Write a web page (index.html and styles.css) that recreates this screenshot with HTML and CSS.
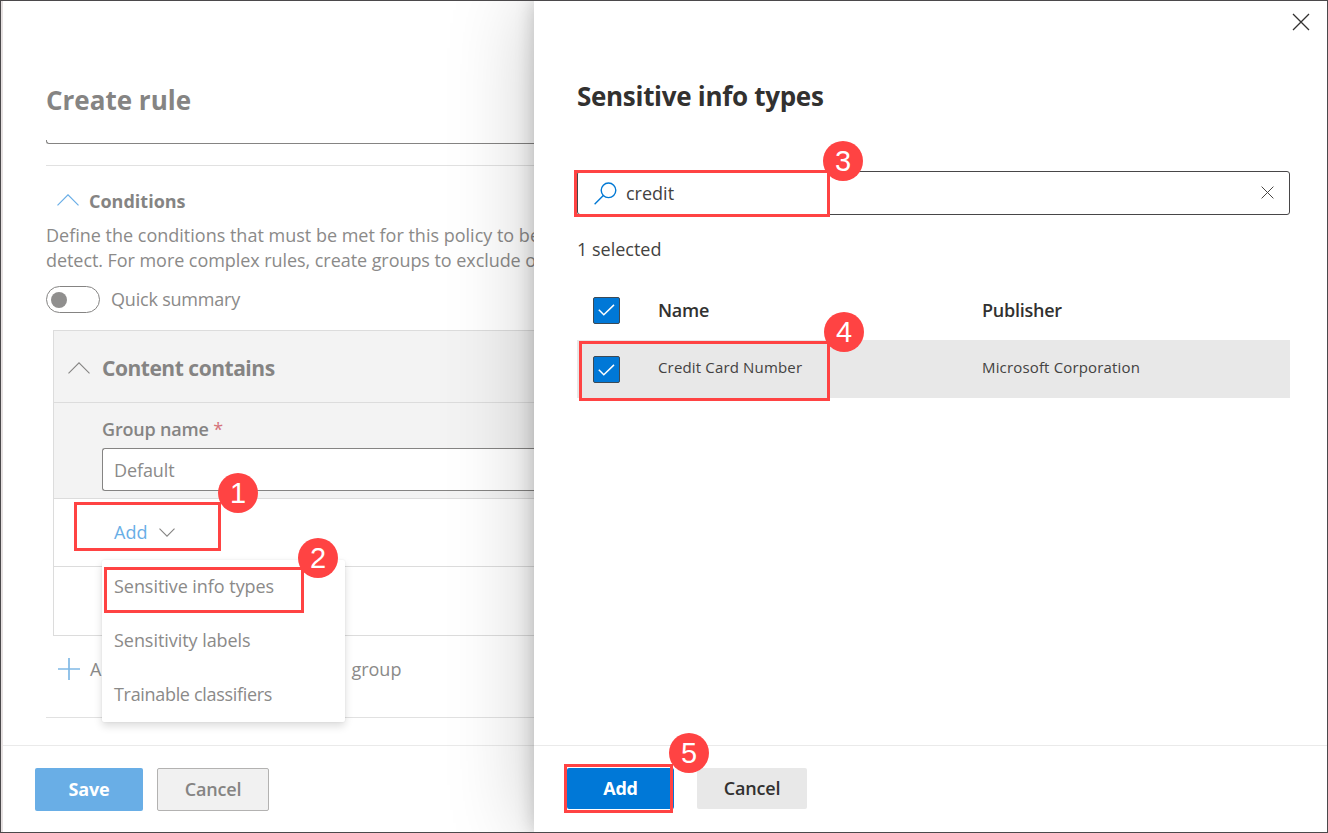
FILE: index.html
```html
<!DOCTYPE html>
<html lang="en">
<head>
<meta charset="utf-8">
<title>Create rule</title>
<link rel="stylesheet" href="styles.css">
</head>
<body>
<div class="window">
  <main class="rule">
    <div class="rule-body">
      <h1 class="rule-title"><span>Create rule</span></h1>
      <div class="field-end"></div>
      <div class="divider"></div>
      <h2 class="conditions">
        <svg class="chev" width="22" height="12" viewBox="0 0 22 12"><path d="M.5 11.3 11 .8l10.500 10.500" fill="none" stroke="#69aee6" stroke-width="1.200"/></svg>
        <span>Conditions</span>
      </h2>
      <div class="intro">
        <div class="intro-a">Define the conditions that must be met for this policy to be</div>
        <div class="intro-b">detect. For more complex rules, create groups to exclude or</div>
      </div>
      <div class="toggle-row"><span class="toggle"><span class="knob"></span></span><span class="toggle-label">Quick summary</span></div>
      <section class="group">
        <div class="group-head">
          <svg width="22" height="12" viewBox="0 0 22 12"><path d="M.5 11.300 11 .8l10.500 10.500" fill="none" stroke="#858483" stroke-width="1.100"/></svg>
          <span>Content contains</span>
        </div>
        <div class="group-name">
          <div class="label"><span>Group name</span> <span class="req">*</span></div>
          <div class="input"><span>Default</span></div>
        </div>
        <div class="group-add">
          <span>Add</span>
          <svg width="16" height="9" viewBox="0 0 16 9"><path d="M.5.700 8 8.200l7.500-7.500" fill="none" stroke="#858483" stroke-width="1.100"/></svg>
        </div>
        <div class="group-rest"></div>
      </section>
      <div class="add-group">
        <svg width="22" height="22" viewBox="0 0 22 22"><path d="M11 0v22M0 11h22" stroke="#80b9e6" stroke-width="1.700"/></svg>
        <span>A</span><span class="add-tail">group</span>
      </div>
      <div class="divider"></div>
    </div>
    <footer class="rule-foot"><span class="btn save">Save</span><span class="btn cancel-left">Cancel</span></footer>
    <div class="menu">
      <div class="m1">Sensitive info types</div><div class="m2">Sensitivity labels</div><div class="m3">Trainable classifiers</div>
    </div>
  </main>
  <aside class="drawer">
    <div class="drawer-body">
      <div class="close-row"><svg width="18" height="18" viewBox="0 0 18 18"><path d="M1 1l16 16M17 1 1 17" stroke="#323130" stroke-width="1.300"/></svg></div>
      <h1 class="drawer-title"><span>Sensitive info types</span></h1>
      <div class="search">
        <svg width="23" height="23" viewBox="0 0 23 23"><g fill="none" stroke="#0078d4" stroke-width="1.400"><circle cx="14.500" cy="8.300" r="7.300"/><path d="M9.300 13.500.6 22.200"/></g></svg>
        <span class="query">credit</span>
        <svg class="clear" width="13" height="13" viewBox="0 0 13 13"><path d="M.6.600l11.800 11.800M12.400.6.600 12.400" stroke="#484644" stroke-width="1"/></svg>
      </div>
      <div class="count"><span>1 selected</span></div>
      <div class="row head">
        <span class="check"><svg width="17" height="12" viewBox="0 0 17 12"><path d="M.8 5.800l5 5L16 .9" fill="none" stroke="#fff" stroke-width="1.500"/></svg></span>
        <span class="name">Name</span><span class="pub">Publisher</span>
      </div>
      <div class="row item">
        <span class="check"><svg width="17" height="12" viewBox="0 0 17 12"><path d="M.8 5.800l5 5L16 .9" fill="none" stroke="#fff" stroke-width="1.500"/></svg></span>
        <span class="name">Credit Card Number</span><span class="pub">Microsoft Corporation</span>
      </div>
    </div>
    <footer class="drawer-foot"><span class="btn add">Add</span><span class="btn cancel">Cancel</span></footer>
  </aside>
  <div class="mark mark1"></div><div class="dot dot1">1</div>
  <div class="mark mark2"></div><div class="dot dot2">2</div>
  <div class="mark mark3"></div><div class="dot dot3">3</div>
  <div class="mark mark4"></div><div class="dot dot4">4</div>
  <div class="mark mark5"></div><div class="dot dot5">5</div>
</div>
</body>
</html>
```
FILE: styles.css
```css
* { box-sizing: border-box; }
body { margin: 0; font-family: "Open Sans", "Noto Sans", sans-serif; font-size: 18px; font-weight: 400; color: #323130; background: #fff; }
h1, h2 { margin: 0; }
svg { display: block; flex: none; }
.window { position: relative; display: flex; width: 1328px; height: 833px; border: 1px solid #4b494b; overflow: hidden; background: #fff; }

.rule { position: relative; flex: none; display: flex; flex-direction: column; width: 533px; border-left: 2px solid #e6e1e1; color: #8b8a89; white-space: nowrap; overflow: hidden; }
.rule-body { height: 744px; padding: 81px 0 0 43px; }
.rule-title { height: 36px; line-height: 36px; font-size: 26px; font-weight: 700; color: #858483; }
.field-end { height: 4px; margin-top: 22px; border: solid #858483; border-width: 0 0 1px 1px; border-bottom-left-radius: 3px; }
.divider { height: 1px; background: #e1e1e1; }
.field-end + .divider { margin-top: 21px; }
.conditions { display: flex; align-items: center; gap: 10px; height: 30px; margin-top: 20px; padding-left: 11px; font-size: 18px; font-weight: 700; color: #858483; }
.chev { margin-top: -3px; }
.intro { margin-top: 7px; height: 51px; line-height: 25px; }
.intro-b { letter-spacing: -.06px; }
.toggle-row { display: flex; align-items: center; gap: 11px; height: 27px; margin-top: 12px; }
.toggle { display: flex; align-items: center; width: 54px; height: 27px; padding-left: 4px; border: 1px solid #858483; border-radius: 14px; }
.toggle-label { margin-top: -2px; letter-spacing: -.2px; }
.knob { width: 16px; height: 16px; border-radius: 50%; background: #908f8e; }
.group { margin: 17px 0 0 7px; border: solid #dcdcdc; border-width: 1px 0 0 1px; }
.group-head { display: flex; align-items: center; gap: 12px; height: 72px; padding: 3px 0 0 14px; border-bottom: 1px solid #dcdcdc; background: #f3f3f3; font-size: 21px; font-weight: 700; letter-spacing: -.47px; color: #858483; }
.group-name { height: 96px; padding: 12px 0 0 48px; border-bottom: 1px solid #dcdcdc; background: #f3f3f3; }
.label { height: 28px; line-height: 28px; margin-bottom: 5px; font-weight: 600; letter-spacing: -.18px; color: #858483; }
.req { color: #d5727a; font-weight: 400; }
.input { height: 43px; padding-left: 11px; border: 1px solid #858483; border-right: 0; border-radius: 3px 0 0 3px; line-height: 42px; letter-spacing: -.1px; background: #fff; }
.group-add { display: flex; align-items: center; gap: 12px; height: 68px; padding-left: 60px; border-bottom: 1px solid #dcdcdc; color: #69aee6; }
.group-add span { margin-top: -2px; }
.group-rest { height: 69px; border-bottom: 1px solid #dcdcdc; }
.add-group { display: flex; align-items: center; height: 81px; padding: 0 0 16px 12px; }
.add-group span { margin-left: 10px; }
.add-group .add-tail { margin-left: 250px; }
.rule-foot { display: flex; gap: 14px; height: 87px; padding: 22px 0 0 32px; border-top: 1px solid #eaeaea; }
.btn { display: flex; align-items: center; justify-content: center; border-radius: 2px; padding-bottom: 2px; font-weight: 600; letter-spacing: -.2px; }
.save { width: 108px; height: 43px; color: #fff; background: #69aee6; font-weight: 700; }
.cancel-left { width: 112px; height: 43px; border: 1px solid #b3b2b1; background: #f1f1f1; color: #858483; }
.menu { position: absolute; left: 99px; top: 559px; width: 243px; height: 162px; padding-left: 12px; border-radius: 2px; line-height: 52px; background: #fff; box-shadow: 0 4px 9px rgba(0,0,0,.14), 0 0 2px rgba(0,0,0,.08); }
.menu div { height: 54px; }
.m1, .m2 { letter-spacing: -.05px; }
.m3 { letter-spacing: -.32px; }

.drawer { position: relative; flex: 1; display: flex; flex-direction: column; background: #fff; box-shadow: 0 0 80px rgba(0,0,0,.22), 0 0 18px rgba(0,0,0,.2); white-space: nowrap; }
.drawer-body { height: 744px; padding: 0 37px 0 43px; }
.close-row { display: flex; justify-content: flex-end; height: 76px; padding-top: 12px; margin-right: -20px; }
.drawer-title { height: 38px; line-height: 38px; font-size: 26px; font-weight: 700; letter-spacing: -.3px; }
.search { display: flex; align-items: center; height: 44px; margin-top: 56px; padding: 0 15px 0 16px; border: 1px solid #484648; border-radius: 3px; }
.query { margin-left: 9px; }
.clear { margin: -2px 0 0 auto; }
.count { height: 30px; line-height: 30px; margin-top: 19px; }
.query, .count, .item { color: #434241; }
.row { display: grid; grid-template-columns: 65px 324px 1fr; align-items: center; padding-left: 16px; }
.head { height: 60px; margin-top: 16px; font-weight: 600; letter-spacing: -.25px; }
.item { height: 58px; background: #e8e8e8; font-size: 15px; letter-spacing: .16px; }
.item .check { margin-top: 1px; }
.item .name, .item .pub { margin-top: -4px; }
.check { display: flex; align-items: center; justify-content: center; width: 27px; height: 27px; border: 1px solid #3c4a56; border-radius: 2px; background: #0078d7; }
.drawer-foot { display: flex; gap: 23px; height: 87px; padding: 22px 0 0 33px; border-top: 1px solid #eaeaea; }
.add { width: 107px; height: 41px; color: #fff; background: #0078d7; font-weight: 700; }
.cancel { width: 110px; height: 41px; background: #e8e8e8; }

.mark { position: absolute; border: 3px solid #ff4343; }
.mark1 { left: 73px; top: 501px; width: 147px; height: 49px; }
.mark2 { left: 103px; top: 566px; width: 200px; height: 46px; }
.mark3 { left: 573px; top: 169px; width: 256px; height: 47px; }
.mark4 { left: 578px; top: 340px; width: 251px; height: 60px; }
.mark5 { left: 563px; top: 763px; width: 109px; height: 49px; }
.dot { position: absolute; width: 40px; height: 40px; border-radius: 50%; background: #ff4343; color: #fff; font: 29px/41px "Liberation Sans", Arial, sans-serif; text-align: center; }
.dot1 { left: 217px; top: 472px; }
.dot2 { left: 297px; top: 537px; }
.dot3 { left: 822px; top: 140px; }
.dot4 { left: 823px; top: 311px; }
.dot5 { left: 668px; top: 732px; }
```
